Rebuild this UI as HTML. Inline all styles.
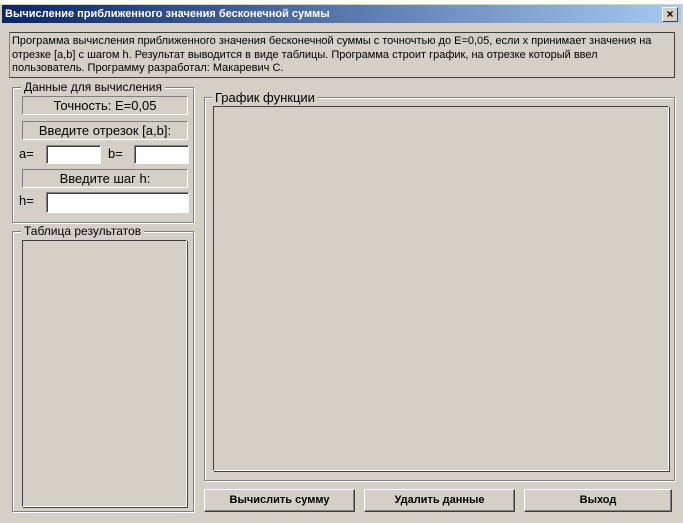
<html><head><style>
body{margin:0;width:683px;height:523px;background:#d4d0c8;position:relative;overflow:hidden;font-family:"Liberation Sans","DejaVu Sans",sans-serif;font-size:11px;color:#000}
.a{position:absolute}
.g{position:absolute;border:1px solid #808080;box-shadow:1px 1px 0 #fff,inset 1px 1px 0 #fff}
.lg{position:absolute;background:#d4d0c8;padding:0 3px;font-size:12px;line-height:12px}
.p{position:absolute;border:1px solid;border-color:#808080 #fff #fff #808080;text-align:center;font-size:13px;line-height:17px}
.i{position:absolute;background:#fff;border:1px solid;border-color:#808080 #fff #fff #808080;box-shadow:inset 1px 1px 0 #404040}
.b{position:absolute;border:1px solid;border-color:#fff #404040 #404040 #fff;box-shadow:inset -1px -1px 0 #808080;text-align:center;font-weight:bold;font-size:11px;line-height:21px}
</style></head><body>
<div class="a" style="left:0;top:0;width:683px;height:5px;background:#fff"></div>
<div class="a" style="left:0;top:4px;width:683px;height:1px;background:#d4d0c8"></div>
<div class="a" style="left:2px;top:5px;width:679px;height:18px;background:linear-gradient(90deg,#0a246a,#a6caf0);color:#fff;font-weight:bold;font-size:11px;line-height:18px;padding-left:3px;box-sizing:border-box">Вычисление приближенного значения бесконечной суммы</div>
<div class="a" style="left:662px;top:7px;width:14px;height:13px;background:#d4d0c8;border:1px solid;border-color:#fff #404040 #404040 #fff;font-size:12px;line-height:13px;text-align:center;font-weight:bold">×</div>
<div class="a" style="left:9px;top:32px;border:1px solid;border-color:#404040 #404040 #404040 #808080;line-height:13.5px;padding:2px 0 0 2px;box-sizing:border-box;width:666px;height:46px;white-space:nowrap;overflow:hidden">Программа вычисления приближенного значения бесконечной суммы с точночтью до E=0,05, если x принимает значения на<br>отрезке [a,b] с шагом h. Результат выводится в виде таблицы. Программа строит график, на отрезке который ввел<br>пользователь. Программу разработал: Макаревич С.</div>

<div class="g" style="left:12px;top:87px;width:180px;height:134px"></div>
<div class="lg" style="left:21px;top:81px">Данные для вычисления</div>
<div class="p" style="left:22px;top:96px;width:164px;height:17px">Точность: E=0,05</div>
<div class="p" style="left:22px;top:121px;width:164px;height:17px">Введите отрезок [a,b]:</div>
<div class="a" style="left:19px;top:146px;font-size:13px">a=</div>
<div class="i" style="left:46px;top:145px;width:53px;height:17px"></div>
<div class="a" style="left:108px;top:146px;font-size:13px">b=</div>
<div class="i" style="left:134px;top:145px;width:53px;height:17px"></div>
<div class="p" style="left:22px;top:169px;width:164px;height:17px">Введите шаг h:</div>
<div class="a" style="left:19px;top:193px;font-size:13px">h=</div>
<div class="i" style="left:46px;top:192px;width:141px;height:19px"></div>

<div class="g" style="left:12px;top:231px;width:180px;height:279px"></div>
<div class="lg" style="left:21px;top:225px">Таблица результатов</div>
<div class="a" style="left:22px;top:240px;width:163px;height:265px;border:1px solid;border-color:#404040 #fff #fff #404040;box-shadow:1px 1px 0 #404040"></div>

<div class="g" style="left:204px;top:97px;width:469px;height:382px"></div>
<div class="lg" style="left:212px;top:91px;font-size:13px;line-height:13px">График функции</div>
<div class="a" style="left:213px;top:106px;width:454px;height:363px;border:1px solid;border-color:#404040 #fff #fff #404040;box-shadow:1px 1px 0 #404040"></div>

<div class="b" style="left:204px;top:489px;width:149px;height:21px">Вычислить сумму</div>
<div class="b" style="left:364px;top:489px;width:149px;height:21px">Удалить данные</div>
<div class="b" style="left:524px;top:489px;width:146px;height:21px">Выход</div>
</body></html>
